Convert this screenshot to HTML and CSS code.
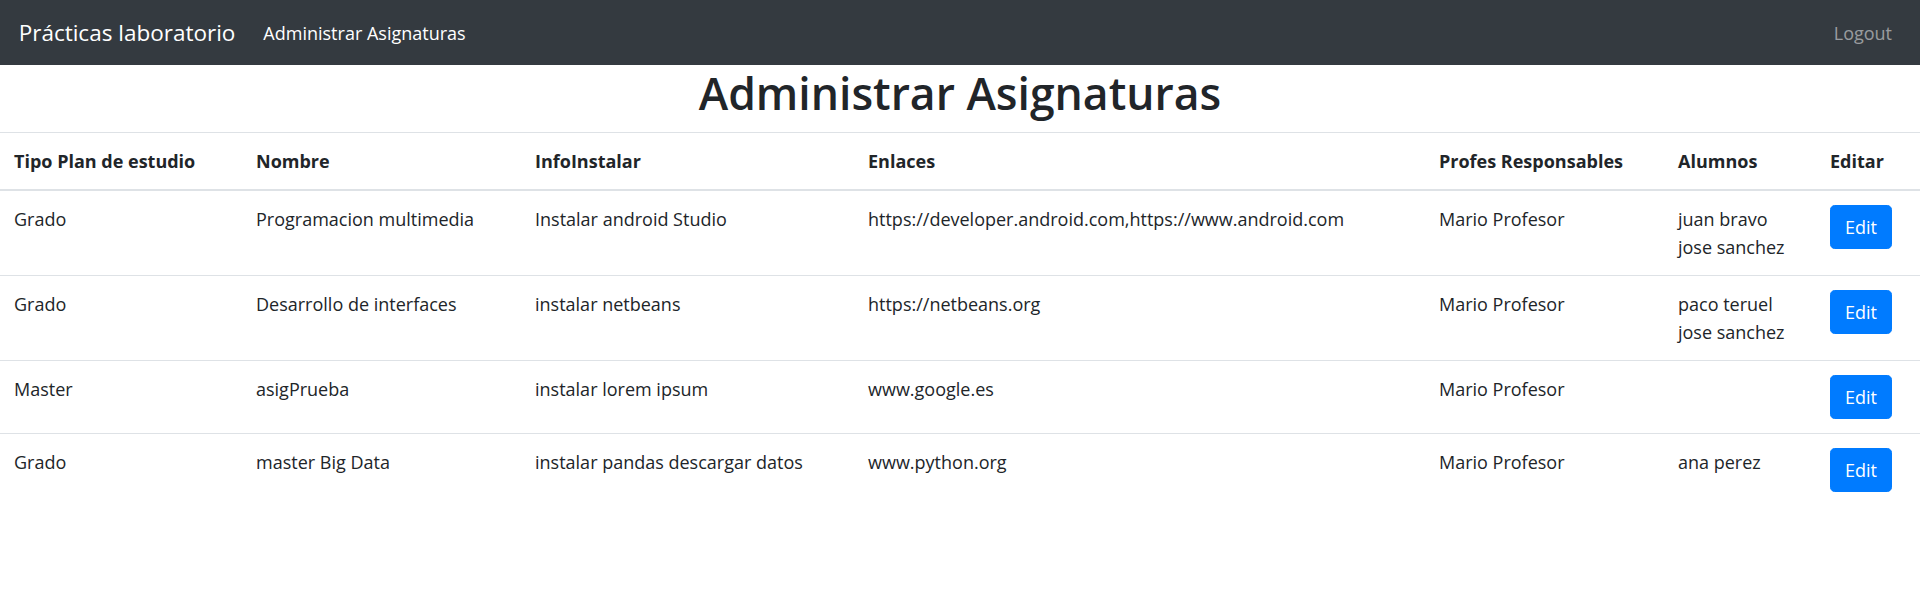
FILE: index.html
```html
<!DOCTYPE html>
<html lang="es">
<head>
<meta charset="utf-8">
<title>Administrar Asignaturas</title>
<link rel="stylesheet" href="styles.css">
</head>
<body>
<nav class="navbar">
  <a class="brand" href="#">Prácticas laboratorio</a>
  <ul class="nav-links">
    <li><a class="nav-link active" href="#">Administrar Asignaturas</a></li>
  </ul>
  <a class="nav-link logout" href="#">Logout</a>
</nav>
<h1 class="title">Administrar Asignaturas</h1>
<table class="table">
  <colgroup>
    <col class="c1"><col class="c2"><col class="c3"><col class="c4"><col class="c5"><col class="c6"><col class="c7">
  </colgroup>
  <thead>
    <tr>
      <th>Tipo Plan de estudio</th>
      <th>Nombre</th>
      <th>InfoInstalar</th>
      <th>Enlaces</th>
      <th>Profes Responsables</th>
      <th>Alumnos</th>
      <th>Editar</th>
    </tr>
  </thead>
  <tbody>
    <tr>
      <td>Grado</td>
      <td>Programacion multimedia</td>
      <td>Instalar android Studio</td>
      <td>https://developer.android.com,https://www.android.com</td>
      <td>Mario Profesor</td>
      <td><div>juan bravo</div><div>jose sanchez</div></td>
      <td><button class="btn">Edit</button></td>
    </tr>
    <tr>
      <td>Grado</td>
      <td>Desarrollo de interfaces</td>
      <td>instalar netbeans</td>
      <td>https://netbeans.org</td>
      <td>Mario Profesor</td>
      <td><div>paco teruel</div><div>jose sanchez</div></td>
      <td><button class="btn">Edit</button></td>
    </tr>
    <tr>
      <td>Master</td>
      <td>asigPrueba</td>
      <td>instalar lorem ipsum</td>
      <td>www.google.es</td>
      <td>Mario Profesor</td>
      <td></td>
      <td><button class="btn">Edit</button></td>
    </tr>
    <tr class="last">
      <td>Grado</td>
      <td>master Big Data</td>
      <td>instalar pandas descargar datos</td>
      <td>www.python.org</td>
      <td>Mario Profesor</td>
      <td><div>ana perez</div></td>
      <td><button class="btn">Edit</button></td>
    </tr>
  </tbody>
</table>
</body>
</html>
```
FILE: styles.css
```css
* { box-sizing: border-box; }

html, body {
  margin: 0;
  padding: 0;
  background: #fff;
}

body {
  font-family: "Open Sans", "Noto Sans", sans-serif;
  font-size: 18px;
  line-height: 28px;
  color: #212529;
}

.navbar {
  display: flex;
  align-items: center;
  background: #343a40;
  padding: 9.33px 18.67px;
  height: 65px;
}

.brand {
  font-size: 22.5px;
  line-height: 35px;
  padding: 5.83px 0;
  margin-right: 18.67px;
  color: #fff;
  text-decoration: none;
  white-space: nowrap;
}

.nav-links {
  list-style: none;
  margin: 0;
  padding: 0;
  display: flex;
  flex: 1;
}

.nav-link {
  display: block;
  padding: 9.33px;
  line-height: 28px;
  text-decoration: none;
  color: rgba(255, 255, 255, 0.5);
}

.nav-link.active {
  color: #fff;
}

.title {
  margin: 0 0 10.67px;
  font-size: 44.5px;
  line-height: 56px;
  font-weight: 600;
  text-align: center;
}

.table {
  width: 100%;
  border-collapse: collapse;
  table-layout: fixed;
}

.c1 { width: 242px; }
.c2 { width: 279px; }
.c3 { width: 333px; }
.c4 { width: 571px; }
.c5 { width: 239px; }
.c6 { width: 152px; }
.c7 { width: 104px; }

.table th,
.table td {
  padding: 14px;
  text-align: left;
  vertical-align: top;
  border-top: 1px solid #dee2e6;
  white-space: nowrap;
}

.table th {
  font-weight: 700;
  border-bottom: 2px solid #dee2e6;
}

.table thead + tbody tr:first-child td {
  border-top: 0;
}

.btn {
  font-family: inherit;
  font-size: 18px;
  line-height: 28px;
  padding: 7px 14px;
  color: #fff;
  background: #007bff;
  border: 1px solid #007bff;
  border-radius: 4.67px;
  cursor: pointer;
}
```
